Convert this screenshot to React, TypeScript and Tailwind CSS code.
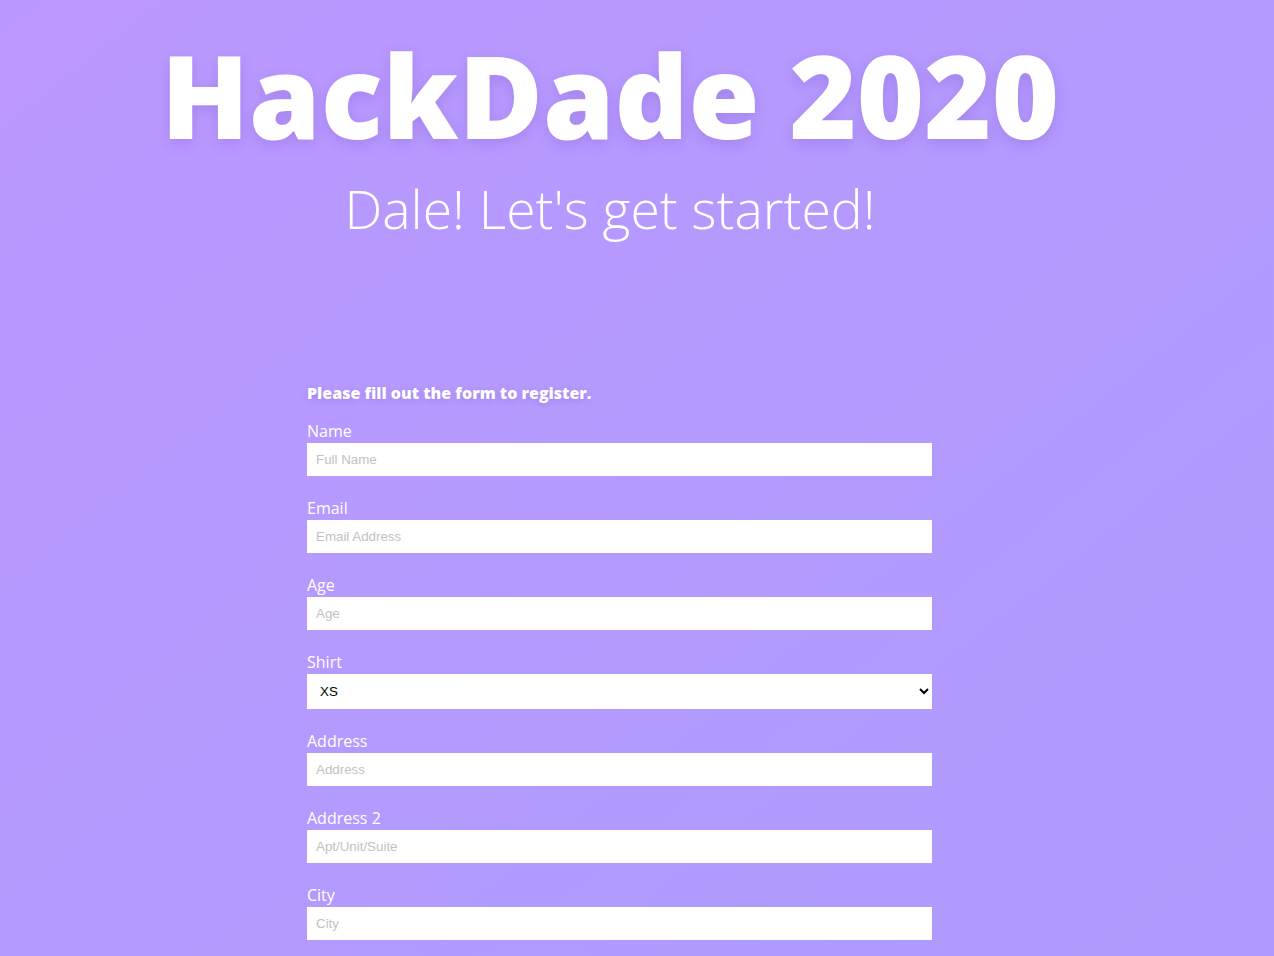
import React from 'react';

const fields: { label: string; placeholder: string }[] = [
  { label: 'Name', placeholder: 'Full Name' },
  { label: 'Email', placeholder: 'Email Address' },
  { label: 'Age', placeholder: 'Age' },
];

const moreFields: { label: string; placeholder: string }[] = [
  { label: 'Address', placeholder: 'Address' },
  { label: 'Address 2', placeholder: 'Apt/Unit/Suite' },
  { label: 'City', placeholder: 'City' },
];

function Field({ label, placeholder }: { label: string; placeholder: string }) {
  return (
    <div className="mb-5 flex flex-col">
      <label className="text-[16px] leading-6 text-white">{label}</label>
      <input
        type="text"
        placeholder={placeholder}
        className="h-[33px] w-full bg-white px-[9px] font-['Liberation_Sans',Arial,sans-serif] text-[13.33px] text-black outline-none placeholder:text-[#c2c2c2]"
      />
    </div>
  );
}

export default function App() {
  return (
    <div className="min-h-screen w-full bg-gradient-to-br from-[#bb98ff] to-[#ac9cfd] font-['Open_Sans',sans-serif] pb-16">
      {/* Header */}
      <header className="pr-[54px] text-center text-white">
        <h1 className="pt-[37px] text-[115px] font-extrabold leading-none [text-shadow:0_4px_14px_rgba(80,40,160,0.18)]">
          HackDade 2020
        </h1>
        <p className="mt-[30px] text-[53.5px] font-light leading-none">Dale! Let's get started!</p>
      </header>

      {/* Registration form */}
      <form className="ml-[307px] mt-[145px] w-[625px]">
        <h2 className="mb-[14px] text-[16px] font-extrabold leading-6 text-white [text-shadow:0_2px_6px_rgba(80,40,160,0.2)]">
          Please fill out the form to register.
        </h2>
        {fields.map((f) => (
          <Field key={f.label} {...f} />
        ))}
        <div className="mb-5 flex flex-col">
          <label className="text-[16px] leading-6 text-white">Shirt</label>
          <select className="h-[35px] w-full bg-white px-[9px] font-['Liberation_Sans',Arial,sans-serif] text-[13.33px] text-black outline-none">
            <option>XS</option>
            <option>S</option>
            <option>M</option>
            <option>L</option>
            <option>XL</option>
          </select>
        </div>
        {moreFields.map((f) => (
          <Field key={f.label} {...f} />
        ))}
      </form>
    </div>
  );
}
